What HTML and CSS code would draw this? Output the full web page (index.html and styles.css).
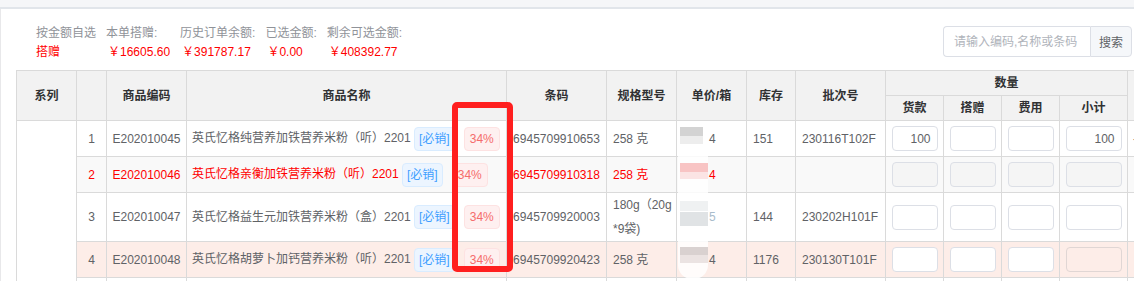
FILE: index.html
```html
<!DOCTYPE html>
<html lang="zh-CN">
<head>
<meta charset="utf-8">
<title>按金额自选</title>
<link rel="stylesheet" href="styles.css">
</head>
<body>
<div class="topbar"></div>
<div class="panel">
  <div class="toolbar">
    <div class="stats">
      <div class="stat"><div class="label">按金额自选</div><div class="value">搭赠</div></div>
      <div class="stat"><div class="label">本单搭赠:</div><div class="value">￥16605.60</div></div>
      <div class="stat"><div class="label">历史订单余额:</div><div class="value">￥391787.17</div></div>
      <div class="stat"><div class="label">已选金额:</div><div class="value">￥0.00</div></div>
      <div class="stat"><div class="label">剩余可选金额:</div><div class="value">￥408392.77</div></div>
    </div>
    <div class="search">
      <input class="search-input" type="text" placeholder="请输入编码,名称或条码">
      <button class="search-btn" type="button">搜索</button>
    </div>
  </div>
  <div class="table-wrap">
    <table class="grid">
      <colgroup>
        <col class="c-series"><col class="c-idx"><col class="c-code"><col class="c-name"><col class="c-bar">
        <col class="c-spec"><col class="c-price"><col class="c-stock"><col class="c-batch">
        <col class="c-q"><col class="c-q"><col class="c-q"><col class="c-sub"><col class="c-extra">
      </colgroup>
      <thead>
        <tr class="h1">
          <th rowspan="2">系列</th>
          <th rowspan="2"></th>
          <th rowspan="2">商品编码</th>
          <th rowspan="2">商品名称</th>
          <th rowspan="2">条码</th>
          <th rowspan="2">规格型号</th>
          <th rowspan="2">单价/箱</th>
          <th rowspan="2">库存</th>
          <th rowspan="2">批次号</th>
          <th colspan="4">数量</th>
          <th rowspan="2"></th>
        </tr>
        <tr class="h2"><th>货款</th><th>搭赠</th><th>费用</th><th>小计</th></tr>
      </thead>
      <tbody>
        <tr class="row">
          <td class="series" rowspan="5"></td>
          <td class="idx">1</td>
          <td class="code">E202010045</td>
          <td class="name">英氏忆格纯营养加铁营养米粉（听）2201 <span class="tag tag-blue">[必销]</span><span class="tag tag-red">34%</span></td>
          <td class="bar">6945709910653</td>
          <td class="left">258 克</td>
          <td class="price">4</td>
          <td class="left">151</td>
          <td class="left">230116T102F</td>
          <td class="q"><input class="qty" type="text" value="100"></td>
          <td class="q"><input class="qty" type="text"></td>
          <td class="q"><input class="qty" type="text"></td>
          <td class="q"><input class="qty wide" type="text" value="100"></td>
          <td class="extra">-</td>
        </tr>
        <tr class="row r2">
          <td class="idx">2</td>
          <td class="code">E202010046</td>
          <td class="name">英氏忆格亲衡加铁营养米粉（听）2201 <span class="tag tag-blue">[必销]</span><span class="tag tag-red">34%</span></td>
          <td class="bar">6945709910318</td>
          <td class="left">258 克</td>
          <td class="price">4</td>
          <td class="left"></td>
          <td class="left"></td>
          <td class="q"><input class="qty off" type="text" disabled></td>
          <td class="q"><input class="qty off" type="text" disabled></td>
          <td class="q"><input class="qty off" type="text" disabled></td>
          <td class="q"><input class="qty wide off" type="text" disabled></td>
          <td class="extra"></td>
        </tr>
        <tr class="row r3">
          <td class="idx">3</td>
          <td class="code">E202010047</td>
          <td class="name">英氏忆格益生元加铁营养米粉（盒）2201 <span class="tag tag-blue">[必销]</span><span class="tag tag-red">34%</span></td>
          <td class="bar">6945709920003</td>
          <td class="left">180g（20g<br>*9袋)</td>
          <td class="price faint">5</td>
          <td class="left">144</td>
          <td class="left">230202H101F</td>
          <td class="q"><input class="qty" type="text"></td>
          <td class="q"><input class="qty" type="text"></td>
          <td class="q"><input class="qty" type="text"></td>
          <td class="q"><input class="qty wide" type="text"></td>
          <td class="extra"></td>
        </tr>
        <tr class="row r4">
          <td class="idx">4</td>
          <td class="code">E202010048</td>
          <td class="name">英氏忆格胡萝卜加钙营养米粉（听）2201 <span class="tag tag-blue">[必销]</span><span class="tag tag-red">34%</span></td>
          <td class="bar">6945709920423</td>
          <td class="left">258 克</td>
          <td class="price">4</td>
          <td class="left">1176</td>
          <td class="left">230130T101F</td>
          <td class="q"><input class="qty" type="text"></td>
          <td class="q"><input class="qty" type="text"></td>
          <td class="q"><input class="qty" type="text"></td>
          <td class="q"><input class="qty wide soft" type="text" disabled></td>
          <td class="extra"></td>
        </tr>
        <tr class="row">
          <td class="idx">5</td>
          <td class="code">E202010049</td>
          <td class="name">英氏忆格多维营养加铁营养米粉（听）2201 <span class="tag tag-blue">[必销]</span><span class="tag tag-red">34%</span></td>
          <td class="bar">6945709920430</td>
          <td class="left">258 克</td>
          <td class="price">4</td>
          <td class="left">980</td>
          <td class="left">230130T102F</td>
          <td class="q"><input class="qty" type="text"></td>
          <td class="q"><input class="qty" type="text"></td>
          <td class="q"><input class="qty" type="text"></td>
          <td class="q"><input class="qty wide" type="text"></td>
          <td class="extra"></td>
        </tr>
      </tbody>
    </table>
  </div>
</div>

<div class="blur">
  <span class="px p1a"></span><span class="px p1b"></span>
  <span class="px p2a"></span><span class="px p2b"></span>
  <span class="px p3a"></span><span class="px p3b"></span>
  <span class="px p4a"></span><span class="px p4b"></span>
</div>
<div class="mark"></div>
</body>
</html>
```

FILE: styles.css
```css
* { box-sizing: border-box; }
html, body { margin: 0; padding: 0; background: #fff; }
body {
  position: relative;
  width: 1134px;
  height: 281px;
  overflow: hidden;
  font-family: "Liberation Sans", "Noto Sans CJK SC", sans-serif;
  font-size: 12px;
  color: #606266;
}

.topbar {
  height: 9px;
  background: #f5f6f8;
  border-bottom: 2px solid #e1e5ea;
}

.panel {
  border-left: 1px solid #e8e8ea;
  height: 272px;
}

.toolbar {
  display: flex;
  justify-content: space-between;
  align-items: flex-start;
  height: 48px;
  padding: 17px 2px 0 35px;
}

.stats {
  display: flex;
  gap: 10px;
  margin-top: -2px;
  line-height: 19px;
}
.stat .label { color: #909399; white-space: nowrap; }
.stat .value { color: #ff0000; padding-left: 2px; white-space: nowrap; }
.stat:first-child .value { padding-left: 0; }

.search { display: flex; }
.search-input {
  width: 147px;
  height: 31px;
  border: 1px solid #dcdfe6;
  border-right: none;
  border-radius: 4px 0 0 4px;
  padding: 0 10px;
  font: inherit;
  color: #606266;
  outline: none;
}
.search-input::placeholder { color: #b0b4bb; }
.search-btn {
  width: 42px;
  height: 31px;
  border: 1px solid #dcdfe6;
  border-radius: 0 4px 4px 0;
  background: #f5f7fa;
  color: #606266;
  font: inherit;
  padding: 0;
}

.table-wrap {
  margin: 13px 0 0 15px;
  overflow: hidden;
}

.grid {
  border-collapse: collapse;
  table-layout: fixed;
  width: 1171px;
}
.c-series { width: 60px; }
.c-idx { width: 30px; }
.c-code { width: 80px; }
.c-name { width: 320px; }
.c-bar { width: 100px; }
.c-spec { width: 70px; }
.c-price { width: 70px; }
.c-stock { width: 49px; }
.c-batch { width: 90px; }
.c-q { width: 58px; }
.c-sub { width: 68px; }
.c-extra { width: 60px; }

.grid th, .grid td {
  border: 1px solid #dadada;
  padding: 0 6px;
  line-height: 24px;
  white-space: nowrap;
  overflow: hidden;
}
.grid th {
  background: #f2f2f2;
  color: #303133;
  font-weight: bold;
  text-align: center;
}
.h1 { height: 23px; }
.h2 { height: 22px; }
.row { height: 36px; }
.row.r3 { height: 46px; }

.grid td.series { background: #fff; }
.grid td.idx, .grid td.code, .grid td.bar, .grid td.q { text-align: center; padding: 0; }
.grid td.name { padding-left: 5px; }
.grid td.left { text-align: left; }
.grid td.price { padding-left: 32px; }
.grid td.extra { padding-left: 5px; color: #606266; }
.grid td.faint { color: #a9bccb; }

.r2 td { background: #f9f9f9; color: #ff0000; }
.r4 td { background: #fdede8; }

.tag {
  display: inline-block;
  height: 24px;
  line-height: 22px;
  border: 1px solid;
  border-radius: 4px;
  vertical-align: middle;
}
.tag-blue {
  margin-left: 0;
  padding: 0 4px;
  background: #ecf5ff;
  border-color: #d9ecff;
  color: #409eff;
}
.tag-red {
  margin-left: 9px;
  padding: 0 5px;
  background: #fef0f0;
  border-color: #fde2e2;
  color: #f56c6c;
}

.qty {
  display: block;
  margin: 0 auto;
  width: 46px;
  height: 25px;
  border: 1px solid #dcdfe6;
  border-radius: 4px;
  padding: 0 6px;
  text-align: right;
  font: inherit;
  color: #606266;
  background: #fff;
  outline: none;
}
.qty.wide { width: 56px; }
.qty.off { background: #f5f5f5; border-color: #dcdfe6; }
.qty.soft { background: transparent; border-color: #e0d6d4; }

.mark {
  position: absolute;
  left: 452px;
  top: 102px;
  width: 61px;
  height: 170px;
  border: 6px solid #ff1f1f;
  border-radius: 5px;
}

.blur {
  position: absolute;
  left: 678px;
  top: 121px;
  width: 30px;
  height: 158px;
  border-radius: 14px;
  background: rgba(255, 255, 255, 0.82);
}
.px { position: absolute; display: block; }
.p1a { left: 2px; top: 6px; width: 23px; height: 9px; background: #d3d3d3; }
.p1b { left: 2px; top: 15px; width: 23px; height: 8px; background: #ededed; }
.p2a { left: 2px; top: 42px; width: 28px; height: 9px; background: #f8c4c4; }
.p2b { left: 2px; top: 51px; width: 28px; height: 7px; background: #fbe4e4; }
.p3a { left: 2px; top: 80px; width: 28px; height: 10px; background: #eff1f2; }
.p3b { left: 2px; top: 91px; width: 28px; height: 14px; background: #e0e3e5; }
.p4a { left: 2px; top: 126px; width: 28px; height: 8px; background: #d9d1d0; }
.p4b { left: 2px; top: 134px; width: 28px; height: 8px; background: #ebe3e2; }
```
